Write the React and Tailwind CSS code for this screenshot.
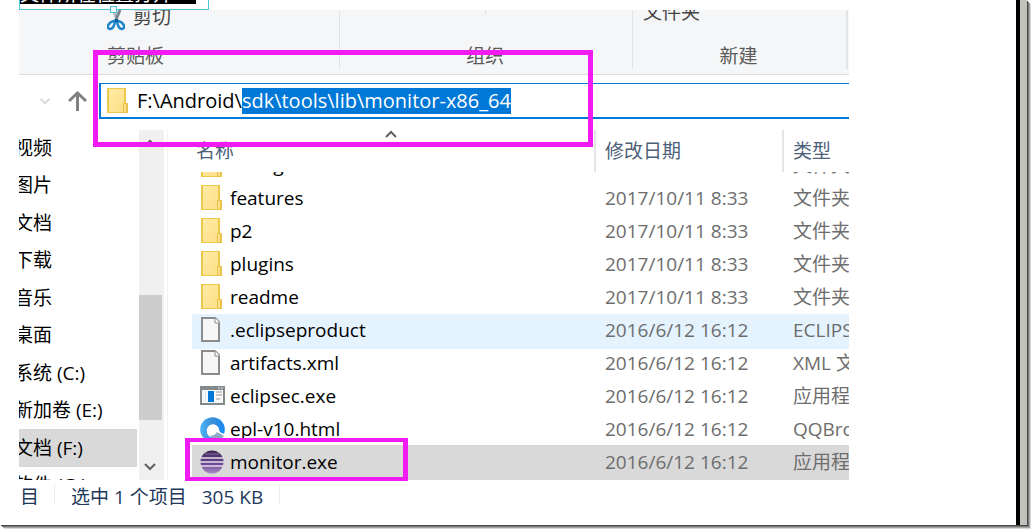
import { useEffect, useRef } from "react";

const PATH = "F:\\Android\\sdk\\tools\\lib\\monitor-x86_64";

function FolderIcon() {
  return (
    <svg width="22" height="26" viewBox="0 0 22 26" aria-hidden="true">
      <defs>
        <linearGradient id="fold" x1="0" y1="0" x2="1" y2="1">
          <stop offset="0" stopColor="#ffeaa6" />
          <stop offset="1" stopColor="#fddf86" />
        </linearGradient>
      </defs>
      <rect x="0" y="0" width="19" height="25" fill="#ecc94b" />
      <rect x="2" y="1" width="15" height="23" fill="url(#fold)" />
      <path d="M16 15h5v10h-5z" fill="#e8c24a" />
      <path d="M17 16h2v8h-2z" fill="#ffe08a" />
    </svg>
  );
}

function FileIcon() {
  return (
    <svg width="22" height="26" viewBox="0 0 22 26" aria-hidden="true">
      <path d="M1 1h13l4 4v19H1z" fill="#f7f7f7" stroke="#8c8c8c" strokeWidth="2" />
      <path d="M14 1v5h5" fill="#fff" stroke="#8c8c8c" strokeWidth="1" />
    </svg>
  );
}

function AppIcon() {
  return (
    <svg width="25" height="20" viewBox="0 0 25 20" aria-hidden="true">
      <rect width="25" height="19" fill="#84898c" />
      <rect x="2" y="4" width="21" height="13" fill="#f8f8f8" />
      <path d="M5 5h1v11H5z" fill="#dde3ea" />
      <rect x="8" y="5" width="6" height="11" fill="#0078d7" />
      <path d="M16 6h6M16 9h6M16 13h4" stroke="#9a9a9a" strokeWidth="1.2" />
      <path d="M18 2h2M21 2h2" stroke="#e5e5e5" strokeWidth="1" />
    </svg>
  );
}

function BrowserIcon() {
  return (
    <svg width="25" height="25" viewBox="0 0 25 25" aria-hidden="true">
      <defs>
        <linearGradient id="qb" x1="0" y1="0" x2="1" y2="0">
          <stop offset="0" stopColor="#4db5f5" />
          <stop offset="0.5" stopColor="#3a8fd8" />
          <stop offset="1" stopColor="#1488f5" />
        </linearGradient>
      </defs>
      <circle cx="12.5" cy="12.5" r="12.3" fill="url(#qb)" />
      <path d="M7 15a6 6 0 1 1 12-3c0 2 1 4 6 5v8H11c2-1 4-3 3-5-3 1-7-1-7-5z" fill="#fff" />
      <path d="M10 18c3 1 5 0 7-3l7 4c-2 3-7 5-11 3z" fill="#8fa9c4" />
    </svg>
  );
}

function EclipseIcon() {
  return (
    <svg width="24" height="24" viewBox="0 0 24 24" aria-hidden="true">
      <defs>
        <linearGradient id="ec" x1="0" y1="0" x2="0" y2="1">
          <stop offset="0" stopColor="#3d2650" />
          <stop offset="0.6" stopColor="#6d4a94" />
          <stop offset="1" stopColor="#a98cc8" />
        </linearGradient>
      </defs>
      <circle cx="12" cy="12" r="11.5" fill="url(#ec)" />
      <path d="M1 8h22M0 12h24M1 16h22" stroke="#e6dcf2" strokeWidth="1.5" />
      <path d="M5 4h14" stroke="#8b6aa8" strokeWidth="1" />
    </svg>
  );
}

function ScissorsIcon() {
  return (
    <svg width="18" height="24" viewBox="0 0 18 24" aria-hidden="true">
      <path d="M6 2 11 15" stroke="#b4bbc1" strokeWidth="3" />
      <path d="M13 3 8 15" stroke="#7b858e" strokeWidth="3" />
      <path d="M2 17q2-3 6-3-1 8-5 8-4-1-1-5z" fill="#f5f6f7" stroke="#1c84cc" strokeWidth="2.5" />
      <path d="M16 17q-2-3-6-3 1 8 5 8 4-1 1-5z" fill="#f5f6f7" stroke="#1c84cc" strokeWidth="2.5" />
      <rect x="8" y="12" width="3" height="3" fill="#155f96" />
    </svg>
  );
}

function Chevron({ className, up }) {
  return (
    <svg className={className} viewBox="0 0 12 8" aria-hidden="true">
      <path d={up ? "M1 7l5-5 5 5" : "M1 1l5 5 5-5"} fill="none" stroke="currentColor" strokeWidth="2" />
    </svg>
  );
}

const places = ["视频", "图片", "文档", "下载", "音乐", "桌面", "系统 (C:)", "新加卷 (E:)", "文档 (F:)", "软件 (G:)"];

const files = [
  { name: "configuration", date: "2016/6/13 16:08", type: "文件夹", Icon: FolderIcon },
  { name: "features", date: "2017/10/11 8:33", type: "文件夹", Icon: FolderIcon },
  { name: "p2", date: "2017/10/11 8:33", type: "文件夹", Icon: FolderIcon },
  { name: "plugins", date: "2017/10/11 8:33", type: "文件夹", Icon: FolderIcon },
  { name: "readme", date: "2017/10/11 8:33", type: "文件夹", Icon: FolderIcon },
  { name: ".eclipseproduct", date: "2016/6/12 16:12", type: "ECLIPSE", Icon: FileIcon, tone: "bg-[#e5f3ff] shadow-[0_2px_0_#e5f3ff]" },
  { name: "artifacts.xml", date: "2016/6/12 16:12", type: "XML 文档", Icon: FileIcon },
  { name: "eclipsec.exe", date: "2016/6/12 16:12", type: "应用程序", Icon: AppIcon },
  { name: "epl-v10.html", date: "2016/6/12 16:12", type: "QQBrowser", Icon: BrowserIcon },
  { name: "monitor.exe", date: "2016/6/12 16:12", type: "应用程序", Icon: EclipseIcon, tone: "bg-[#d9d9d9] shadow-[0_-1px_0_#d9d9d9,0_1px_0_#d9d9d9]" },
];

function Ribbon() {
  return (
    <div className="flex h-[65px] overflow-hidden border-b border-[#dadbdc] bg-[#f5f6f7] text-[#5a5a5a]">
      <section className="flex w-[320px] flex-col pl-[88px]">
        <button className="-mt-[3px] flex h-6 items-center gap-2 text-[#444]">
          <ScissorsIcon />
          <span className="-mt-1">剪切</span>
        </button>
        <h2 className="mt-3">剪贴板</h2>
      </section>
      <section className="mb-[5px] flex flex-1 flex-col items-center border-l border-[#e2e3e4] pr-[2px]">
        <span className="h-[5px] w-px bg-[#e2e3e4]" />
        <h2 className="mt-7">组织</h2>
      </section>
      <section className="mr-px mb-[5px] flex w-[216px] flex-col border-r-2 border-l border-[#e2e3e4] pr-[2px]">
        <button className="-mt-[12px] h-7 pl-[10px] text-left text-[#444]">文件夹</button>
        <h2 className="mt-[17px] text-center">新建</h2>
      </section>
    </div>
  );
}

function AddressBar() {
  const ref = useRef(null);
  useEffect(() => {
    ref.current.focus();
    ref.current.setSelectionRange(11, PATH.length);
  }, []);
  return (
    <div className="mt-2 flex h-9 items-center">
      <button aria-label="最近位置" className="ml-[20px] text-[#d4d4d4]">
        <Chevron className="h-[7px] w-[12px]" />
      </button>
      <button aria-label="上移" className="ml-[17px] text-[#808080]">
        <svg width="19" height="20" viewBox="0 0 19 20" aria-hidden="true">
          <path d="M9.5 20V2M1 10l8.500-8 8.500 8" fill="none" stroke="currentColor" strokeWidth="3" />
        </svg>
      </button>
      <label className="ml-3 flex h-9 flex-1 items-center gap-2 border-2 border-t border-r-0 border-[#0078d7] pl-[6px]">
        <FolderIcon />
        <input
          ref={ref}
          aria-label="地址"
          defaultValue={PATH}
          className="h-[26px] min-w-0 flex-1 bg-transparent text-[20px] leading-[26px] text-black caret-transparent outline-none selection:bg-[#0078d7] selection:text-white"
        />
      </label>
    </div>
  );
}

function Sidebar() {
  return (
    <div className="flex w-[149px] shrink-0 border-r border-[#f2f2f2] text-black">
      <nav className="w-[118px] overflow-hidden">
        <ul className="-mt-px flex h-[375px] flex-col">
          {places.map((p) => (
            <li key={p} className={p === "文档 (F:)" ? "flex flex-1 items-center bg-[#d9d9d9]" : "flex flex-1 items-center"}>
              <a href="#place" className="-ml-[5px] whitespace-nowrap">{p}</a>
            </li>
          ))}
        </ul>
      </nav>
      <div className="ml-[2px] flex w-[25px] flex-col items-center bg-[#f0f0f0] py-[9px] pr-[3px] text-[#606060]">
        <Chevron up className="h-[8px] w-[12px]" />
        <div className="mt-auto mb-[43px] h-[125px] w-[23px] self-start bg-[#cdcdcd]" />
        <Chevron className="h-[8px] w-[12px]" />
      </div>
    </div>
  );
}

function FileList() {
  return (
    <table className="ml-[24px] flex h-[350px] min-w-0 flex-1 flex-col text-left">
      <thead className="block text-[#4c607a]">
        <tr className="flex h-[42px] items-center">
          <th className="min-w-0 flex-1 pl-[4px] font-normal">名称</th>
          <th className="flex h-full w-[188px] items-center border-l-2 border-[#e5e5e5] pl-[9px] font-normal">修改日期</th>
          <th className="flex h-full w-[67px] items-center border-l-2 border-[#e5e5e5] pl-[9px] font-normal">类型</th>
        </tr>
      </thead>
      <tbody className="flex min-h-0 flex-1 flex-col justify-end overflow-hidden pb-px text-[#6d6d6d]">
        {files.map(({ name, date, type, Icon, tone }) => (
          <tr key={name} className={tone ? `flex h-[33px] shrink-0 items-center ${tone}` : "flex h-[33px] shrink-0 items-center"}>
            <td className="flex min-w-0 flex-1 items-center gap-[5px] pb-px pl-[7px] text-black">
              <span className="flex w-[26px] justify-center">
                <Icon />
              </span>
              {name}
            </td>
            <td className="w-[188px] pb-px pl-[11px] whitespace-nowrap">{date}</td>
            <td className="w-[67px] overflow-hidden pb-px pl-[11px] whitespace-nowrap">{type}</td>
          </tr>
        ))}
      </tbody>
    </table>
  );
}

export default function App() {
  return (
    <div className="overflow-hidden bg-white pr-1 pb-1 font-['Open_Sans','Noto_Sans_CJK_SC',sans-serif] text-[19px] leading-[26px]">
      <div className="relative flex h-[525px] bg-white shadow-[1px_1px_0_#484848,2px_2px_0_#777,3px_3px_0_#a5a5a5,4px_4px_0_#d8d8d8]">
        <main className="min-w-0 flex-1 pr-[167px] pl-[19px]">
          <div className="relative h-[10px]">
            <div className="h-[10px] w-[190px] border border-t-0 border-[#4bc5d5]">
              <div className="flex h-[4px] w-[176px] items-start overflow-hidden bg-black text-white">
                <span className="-mt-[19px] whitespace-nowrap">文件所在位置打开</span>
              </div>
            </div>
            <span className="absolute top-[6px] left-[91px] z-10 h-[7px] w-[7px] border border-[#4bc5d5] bg-[#f5f6f7]" />
          </div>
          <Ribbon />
          <AddressBar />
          <div className="mt-[11px] flex h-[350px] overflow-hidden">
            <Sidebar />
            <FileList />
          </div>
          <footer className="flex h-[25px] items-start overflow-hidden pt-1 text-[#1e395b]">
            <span className="w-[36px] border-r border-[#eee] pl-px">目</span>
            <span className="pl-4">选中 1 个项目</span>
            <span className="border-r border-[#eee] pr-4 pl-[15px]">305 KB</span>
          </footer>
          <div className="pointer-events-none absolute top-[50px] left-[93px] h-[97px] w-[500px] border-[5px] border-[#f21bf2]" />
          <div className="pointer-events-none absolute top-[438px] left-[185px] h-[43px] w-[223px] border-x-[5px] border-y-4 border-[#f21bf2]" />
          <span className="pointer-events-none absolute top-[130px] left-[385px] text-[#606060]">
            <Chevron up className="block h-[8px] w-[12px]" />
          </span>
        </main>
        <div className="w-[11px] border-l-4 border-black bg-[#c3c1bc]" />
      </div>
    </div>
  );
}
